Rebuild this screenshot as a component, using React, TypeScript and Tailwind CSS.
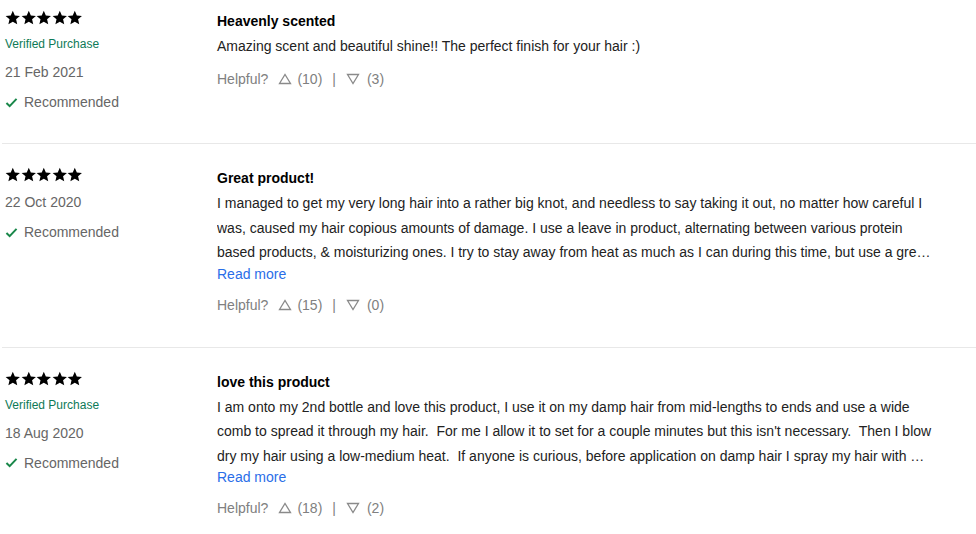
import React from 'react';

interface Review {
  title: string;
  body: string;
  date: string;
  verified: boolean;
  up: number;
  down: number;
  clamp: boolean;
}

const reviews: Review[] = [
  {
    title: 'Heavenly scented',
    body: 'Amazing scent and beautiful shine!! The perfect finish for your hair :)',
    date: '21 Feb 2021',
    verified: true,
    up: 10,
    down: 3,
    clamp: false,
  },
  {
    title: 'Great product!',
    body: 'I managed to get my very long hair into a rather big knot, and needless to say taking it out, no matter how careful I was, caused my hair copious amounts of damage. I use a leave in product, alternating between various protein based products, & moisturizing ones. I try to stay away from heat as much as I can during this time, but use a great heat protectant whenever I do, and this serum finishes everything off nicely.',
    date: '22 Oct 2020',
    verified: false,
    up: 15,
    down: 0,
    clamp: true,
  },
  {
    title: 'love this product',
    body: "I am onto my 2nd bottle and love this product, I use it on my damp hair from mid-lengths to ends and use a wide comb to spread it through my hair.  For me I allow it to set for a couple minutes but this isn't necessary.  Then I blow dry my hair using a low-medium heat.  If anyone is curious, before application on damp hair I spray my hair with leave-in conditioner and heat protection spray.",
    date: '18 Aug 2020',
    verified: true,
    up: 18,
    down: 2,
    clamp: true,
  },
];

const Star = () => (
  <svg viewBox="0 0 24 24" className="w-[15.6px] h-[15.6px]" fill="#000">
    <path d="M12 1.2l3.15 7.2 7.85.7-5.95 5.2 1.75 7.7L12 18l-6.8 4 1.75-7.7L1 9.1l7.85-.7z" />
  </svg>
);

const Tri = ({ down }: { down?: boolean }) => (
  <svg viewBox="0 0 14 12" className="w-[14px] h-[12px]" fill="none" stroke="#8a8a8a" strokeWidth="1.3">
    {down ? <path d="M1.5 1.5h11L7 10.5z" /> : <path d="M1.5 10.5h11L7 1.5z" />}
  </svg>
);

const Check = () => (
  <svg viewBox="0 0 14 12" className="w-[13px] h-[11px]" fill="none" stroke="#19874a" strokeWidth="2.2">
    <path d="M1.5 6.5l3.5 3.5 7.5-8" />
  </svg>
);

export default function App() {
  return (
    <div className="bg-white min-h-screen ml-[2px] font-['Liberation_Sans',Arial,sans-serif]">
      {reviews.map((r, i) => (
        <div
          key={i}
          className={`flex border-b border-[#e8e8e8] pl-[3px] ${i === 0 ? 'pt-[10px] pb-[31px]' : 'pt-[23px] pb-[32px]'}`}
        >
          {/* Left meta column */}
          <div className="w-[212px] shrink-0">
            <div className="flex h-4 items-center">
              {[0, 1, 2, 3, 4].map(n => (
                <Star key={n} />
              ))}
            </div>
            {r.verified && (
              <div className="mt-[8px] text-[12px] leading-[20px] text-[#0e7a57]">Verified Purchase</div>
            )}
            <div className={`${r.verified ? 'mt-[8px]' : 'mt-[9px]'} text-[14px] leading-[20px] text-[#666]`}>{r.date}</div>
            <div className="mt-[10px] flex items-center gap-[6px] text-[14px] leading-[20px] text-[#666]">
              <Check />
              <span>Recommended</span>
            </div>
          </div>

          {/* Review content */}
          <div className="w-[720px]">
            <div className="mt-px text-[14px] leading-[20px] font-bold text-black">{r.title}</div>
            <p
              className={`mt-[3px] text-[14px] leading-[24.5px] text-[#222] whitespace-pre-wrap ${r.clamp ? 'line-clamp-3' : ''}`}
            >
              {r.body}
            </p>
            {r.clamp && <div className="-mt-px text-[14px] leading-[20px] text-[#2a6ee8]">Read more</div>}
            <div className={`${r.clamp ? 'mt-[11px]' : 'mt-[10px]'} flex items-center text-[14px] leading-[20px] text-[#808080]`}>
              <span>Helpful?</span>
              <span className="ml-[10px] flex items-center gap-[5px]">
                <Tri />
                <span>({r.up})</span>
              </span>
              <span className="mx-[10px]">|</span>
              <span className="flex items-center gap-[7px]">
                <Tri down />
                <span>({r.down})</span>
              </span>
            </div>
          </div>
        </div>
      ))}
    </div>
  );
}
